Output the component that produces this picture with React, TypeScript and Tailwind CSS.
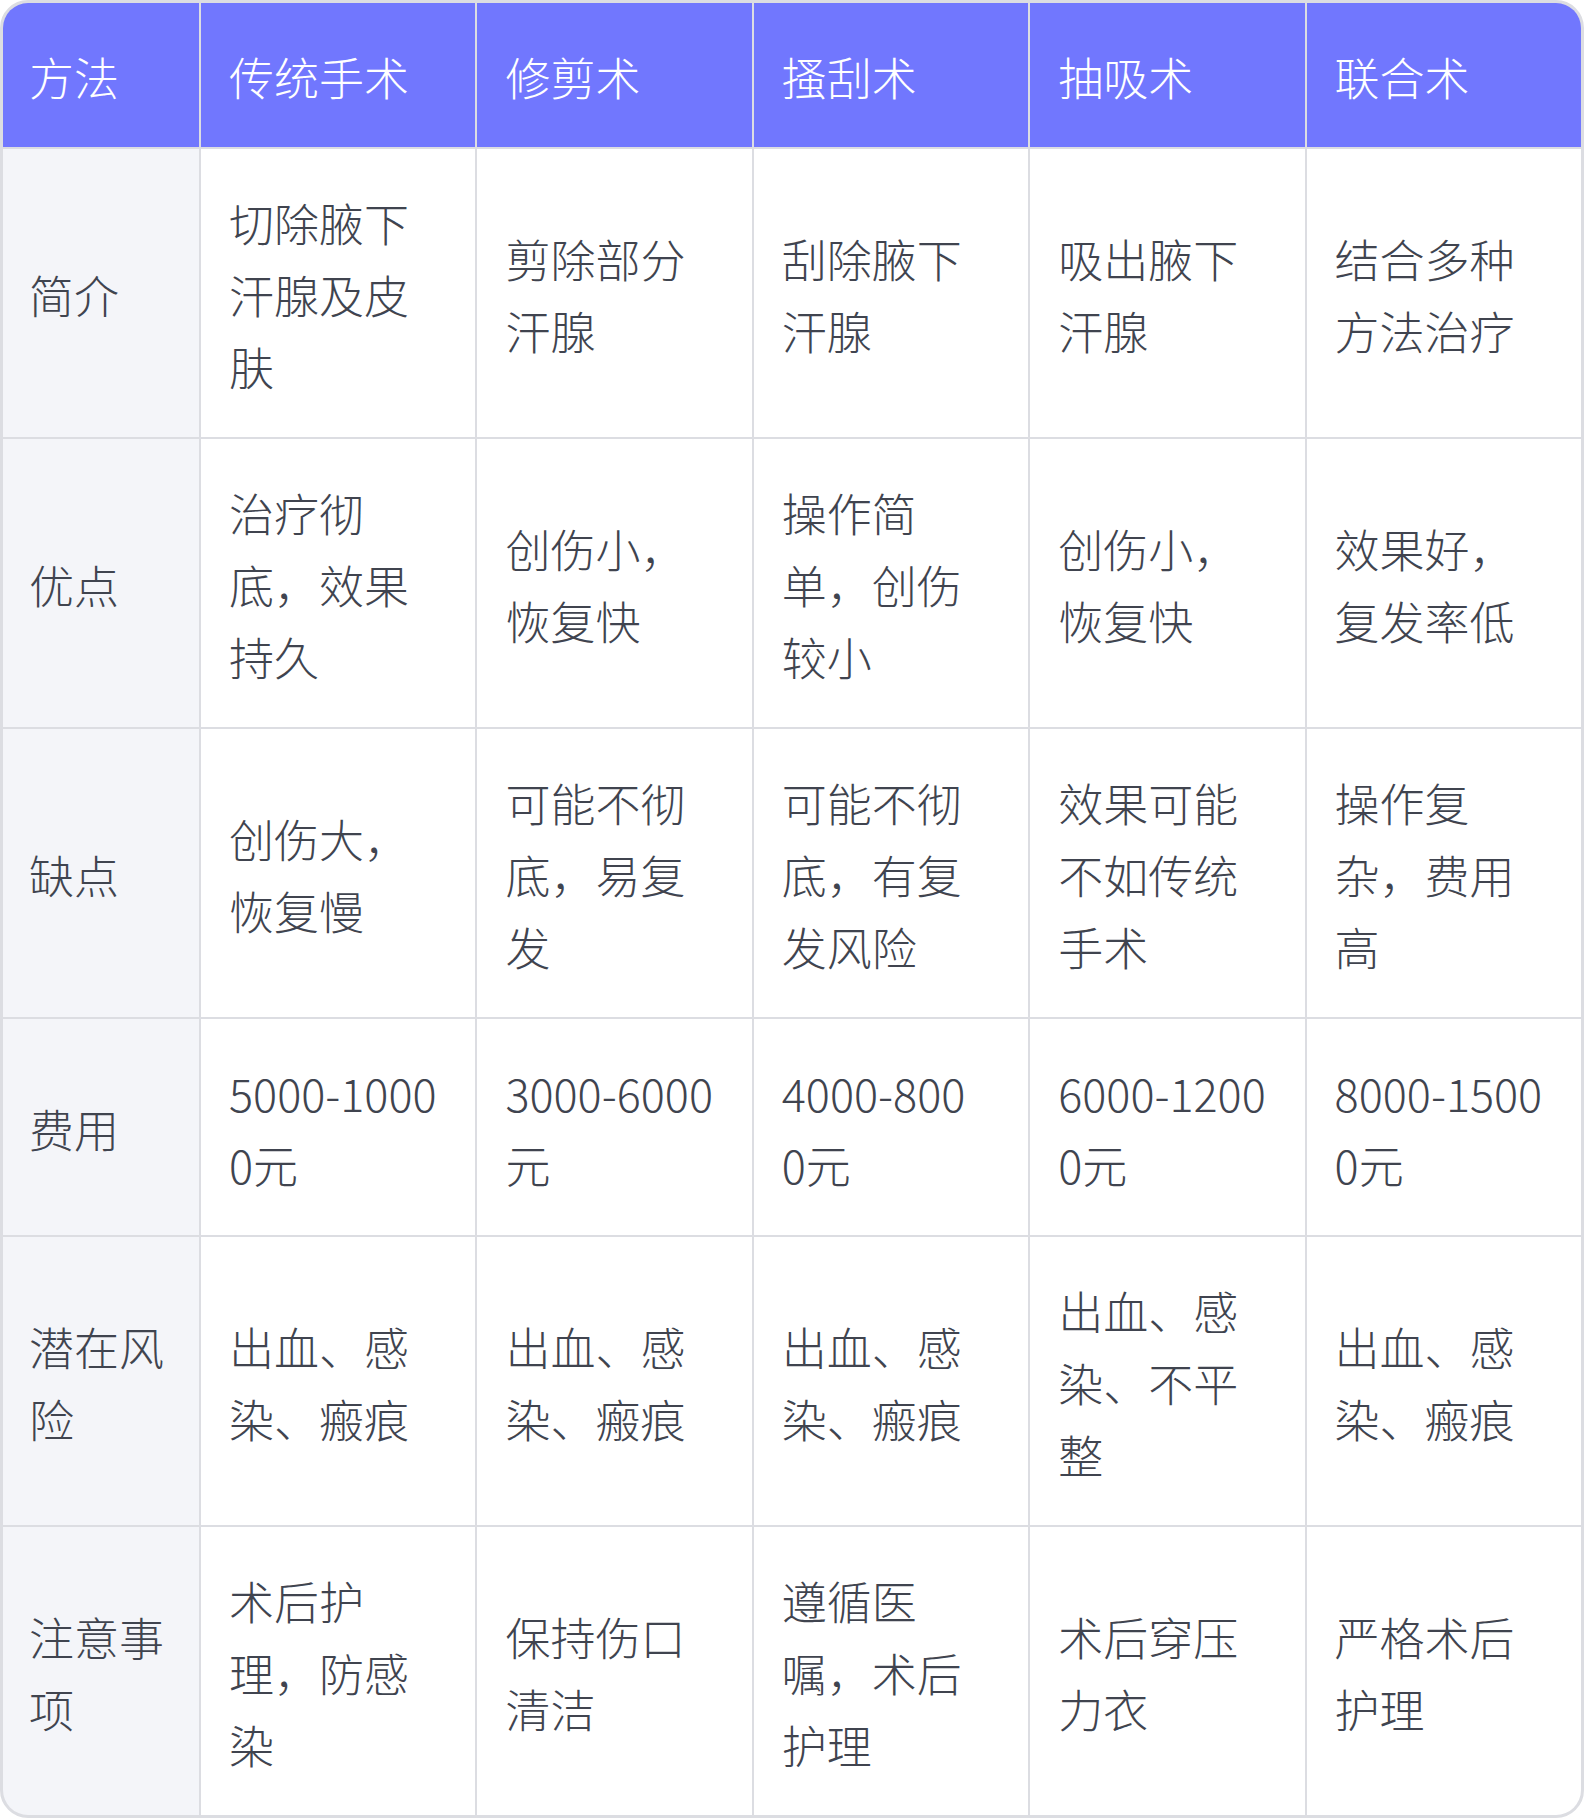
import React from "react";

const header = ["方法", "传统手术", "修剪术", "搔刮术", "抽吸术", "联合术"];

const rows: { label: string[]; cells: string[][] }[] = [
  {
    label: ["简介"],
    cells: [
      ["切除腋下", "汗腺及皮", "肤"],
      ["剪除部分", "汗腺"],
      ["刮除腋下", "汗腺"],
      ["吸出腋下", "汗腺"],
      ["结合多种", "方法治疗"],
    ],
  },
  {
    label: ["优点"],
    cells: [
      ["治疗彻", "底，效果", "持久"],
      ["创伤小，", "恢复快"],
      ["操作简", "单，创伤", "较小"],
      ["创伤小，", "恢复快"],
      ["效果好，", "复发率低"],
    ],
  },
  {
    label: ["缺点"],
    cells: [
      ["创伤大，", "恢复慢"],
      ["可能不彻", "底，易复", "发"],
      ["可能不彻", "底，有复", "发风险"],
      ["效果可能", "不如传统", "手术"],
      ["操作复", "杂，费用", "高"],
    ],
  },
  {
    label: ["费用"],
    cells: [
      ["5000-1000", "0元"],
      ["3000-6000", "元"],
      ["4000-800", "0元"],
      ["6000-1200", "0元"],
      ["8000-1500", "0元"],
    ],
  },
  {
    label: ["潜在风", "险"],
    cells: [
      ["出血、感", "染、瘢痕"],
      ["出血、感", "染、瘢痕"],
      ["出血、感", "染、瘢痕"],
      ["出血、感", "染、不平", "整"],
      ["出血、感", "染、瘢痕"],
    ],
  },
  {
    label: ["注意事", "项"],
    cells: [
      ["术后护", "理，防感", "染"],
      ["保持伤口", "清洁"],
      ["遵循医", "嘱，术后", "护理"],
      ["术后穿压", "力衣"],
      ["严格术后", "护理"],
    ],
  },
];

function Lines({ lines }: { lines: string[] }) {
  return (
    <div>
      {lines.map((l, i) => (
        <div key={i} className="whitespace-nowrap">
          {l}
        </div>
      ))}
    </div>
  );
}

export default function App() {
  return (
    <div className="w-[1584px] bg-white">
      <div
        className="w-[1584px] overflow-hidden rounded-[28px] border-[3px] border-[#dcdde2] bg-[#dcdde2] font-light text-[45px] leading-[72px] text-[#40444f]"
        style={{ fontFamily: '"Noto Sans CJK SC", "Noto Sans", sans-serif' }}
      >
        <div className="grid grid-cols-[196px_repeat(5,minmax(0,1fr))] gap-[2px]">
          {header.map((h, i) => (
            <div
              key={i}
              className={`flex items-center bg-[#7177fe] pt-[38px] pb-[34px] pr-[28px] text-white ${i === 0 ? "pl-[26px]" : "pl-[28px]"}`}
            >
              {h}
            </div>
          ))}
          {rows.map((r, ri) => (
            <React.Fragment key={ri}>
              <div className="flex items-center bg-[#f4f5f9] pt-[38px] pb-[34px] pl-[26px] pr-[20px]">
                <Lines lines={r.label} />
              </div>
              {r.cells.map((c, ci) => (
                <div key={ci} className="flex items-center bg-white pt-[38px] pb-[34px] px-[28px]">
                  <Lines lines={c} />
                </div>
              ))}
            </React.Fragment>
          ))}
        </div>
      </div>
    </div>
  );
}
